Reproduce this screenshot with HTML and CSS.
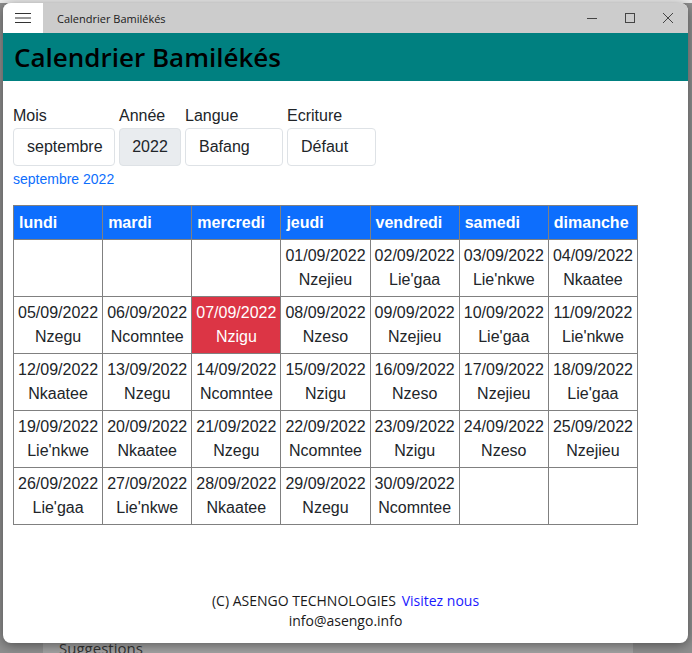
FILE: index.html
```html
<!DOCTYPE html>
<html lang="fr">

<head>
    <meta charset="UTF-8">
    <meta name="viewport" content="width=device-width, initial-scale=1.0">
    <title>Calendrier Bamilékés</title>

    <link rel="stylesheet" href="styles.css">
</head>

<body>
    <div class="desk-panel">Suggestions</div>

    <div class="window">
        <div class="titlebar">
            <div class="menu-btn">
                <svg width="16" height="12" viewBox="0 0 16 12">
                    <path d="M0 1.5h16M0 6h16M0 10.5h16" stroke="#333" stroke-width="1.1" fill="none" />
                </svg>
            </div>
            <span class="win-title">Calendrier Bamilékés</span>
            <div class="win-controls">
                <svg width="12" height="12" viewBox="0 0 12 12">
                    <path d="M1 6.5h10" stroke="#444" stroke-width="1" fill="none" />
                </svg>
                <svg width="12" height="12" viewBox="0 0 12 12">
                    <rect x="1.5" y="1.5" width="9" height="9" stroke="#444" stroke-width="1" fill="none" />
                </svg>
                <svg width="12" height="12" viewBox="0 0 12 12">
                    <path d="M1 1l10 10M11 1L1 11" stroke="#444" stroke-width="1" fill="none" />
                </svg>
            </div>
        </div>

        <header class="app-header">
            <h1>Calendrier Bamilékés</h1>
        </header>

        <main class="content">
            <div class="filters">
                <div class="field">
                    <label>Mois</label>
                    <div class="box box-month">septembre</div>
                </div>
                <div class="field">
                    <label>Année</label>
                    <div class="box box-year">2022</div>
                </div>
                <div class="field">
                    <label>Langue</label>
                    <div class="box box-lang">Bafang</div>
                </div>
                <div class="field">
                    <label>Ecriture</label>
                    <div class="box box-script">Défaut</div>
                </div>
            </div>
            <a class="current" href="#">septembre 2022</a>

            <table class="calendar">
                <thead>
                    <tr>
                        <th>lundi</th>
                        <th>mardi</th>
                        <th>mercredi</th>
                        <th>jeudi</th>
                        <th>vendredi</th>
                        <th>samedi</th>
                        <th>dimanche</th>
                    </tr>
                </thead>
                <tbody>
                    <tr>
                        <td></td>
                        <td></td>
                        <td></td>
                        <td>01/09/2022<br>Nzejieu</td>
                        <td>02/09/2022<br>Lie'gaa</td>
                        <td>03/09/2022<br>Lie'nkwe</td>
                        <td>04/09/2022<br>Nkaatee</td>
                    </tr>
                    <tr>
                        <td>05/09/2022<br>Nzegu</td>
                        <td>06/09/2022<br>Ncomntee</td>
                        <td class="today">07/09/2022<br>Nzigu</td>
                        <td>08/09/2022<br>Nzeso</td>
                        <td>09/09/2022<br>Nzejieu</td>
                        <td>10/09/2022<br>Lie'gaa</td>
                        <td>11/09/2022<br>Lie'nkwe</td>
                    </tr>
                    <tr>
                        <td>12/09/2022<br>Nkaatee</td>
                        <td>13/09/2022<br>Nzegu</td>
                        <td>14/09/2022<br>Ncomntee</td>
                        <td>15/09/2022<br>Nzigu</td>
                        <td>16/09/2022<br>Nzeso</td>
                        <td>17/09/2022<br>Nzejieu</td>
                        <td>18/09/2022<br>Lie'gaa</td>
                    </tr>
                    <tr>
                        <td>19/09/2022<br>Lie'nkwe</td>
                        <td>20/09/2022<br>Nkaatee</td>
                        <td>21/09/2022<br>Nzegu</td>
                        <td>22/09/2022<br>Ncomntee</td>
                        <td>23/09/2022<br>Nzigu</td>
                        <td>24/09/2022<br>Nzeso</td>
                        <td>25/09/2022<br>Nzejieu</td>
                    </tr>
                    <tr>
                        <td>26/09/2022<br>Lie'gaa</td>
                        <td>27/09/2022<br>Lie'nkwe</td>
                        <td>28/09/2022<br>Nkaatee</td>
                        <td>29/09/2022<br>Nzegu</td>
                        <td>30/09/2022<br>Ncomntee</td>
                        <td></td>
                        <td></td>
                    </tr>
                </tbody>
            </table>
        </main>

        <footer class="app-footer">
            <p>(C) ASENGO TECHNOLOGIES <a href="#">Visitez nous</a></p>
            <p>info@asengo.info</p>
        </footer>
    </div>
</body>

</html>
```

FILE: styles.css
```css
* {
    box-sizing: border-box;
}

body {
    margin: 0;
    padding: 3px 0 0 3px;
    width: 692px;
    height: 653px;
    overflow: hidden;
    position: relative;
    background: linear-gradient(#ececec 0, #ececec 3px, #8f8f8f 3px);
    font-family: 'Liberation Sans', Arial, sans-serif;
}

.desk-panel {
    position: absolute;
    left: 43px;
    top: 600px;
    width: 590px;
    height: 53px;
    padding: 38px 0 0 16px;
    background: #a2a2a2;
    color: #333;
    font-family: 'Open Sans', sans-serif;
    font-size: 15px;
    line-height: 20px;
}

.window {
    position: relative;
    width: 685px;
    height: 640px;
    background: #fff;
    border-radius: 8px;
    overflow: hidden;
    display: flex;
    flex-direction: column;
    box-shadow: 0 2px 12px rgba(0, 0, 0, 0.45);
}

/* title bar */
.titlebar {
    height: 30px;
    background: #cccccc;
    display: flex;
    align-items: center;
    flex-shrink: 0;
}

.menu-btn {
    width: 40px;
    height: 30px;
    background: #fff;
    display: flex;
    align-items: center;
    justify-content: center;
}

.win-title {
    margin-left: 14px;
    font-family: 'Open Sans', sans-serif;
    font-size: 11px;
    color: #1a1a1a;
}

.win-controls {
    margin-left: auto;
    display: flex;
    gap: 26px;
    padding-right: 14px;
}

/* header */
.app-header {
    height: 48px;
    background: #008080;
    display: flex;
    align-items: center;
    padding-left: 11px;
    flex-shrink: 0;
}

.app-header h1 {
    margin: 0;
    font-family: 'Open Sans', sans-serif;
    font-size: 26px;
    font-weight: 600;
    color: #000;
}

/* form */
.content {
    flex: 1;
    padding: 25px 10px 0 10px;
}

.filters {
    display: flex;
    gap: 4px;
}

.field {
    display: flex;
    flex-direction: column;
}

.field label {
    font-size: 16px;
    line-height: 20px;
    color: #212529;
    margin-bottom: 2px;
}

.box {
    height: 38px;
    border: 1px solid #dee2e6;
    border-radius: 4px;
    font-size: 16px;
    line-height: 36px;
    color: #212529;
    padding: 0 13px;
    background: #fff;
}

.box-month {
    width: 102px;
}

.box-year {
    width: 62px;
    text-align: center;
    padding: 0;
    background: #e9ecef;
}

.box-lang {
    width: 98px;
}

.box-script {
    width: 89px;
}

.current {
    display: block;
    margin-top: 4px;
    font-size: 14px;
    line-height: 18px;
    color: #0d6efd;
    text-decoration: none;
}

/* calendar */
.calendar {
    margin-top: 17px;
    width: 625px;
    border-collapse: collapse;
    table-layout: fixed;
    font-size: 16px;
}

.calendar th,
.calendar td {
    border: 1px solid #808080;
}

.calendar th {
    height: 34px;
    background: #0d6efd;
    color: #fff;
    font-weight: bold;
    text-align: left;
    padding: 0 5px;
}

.calendar td {
    height: 57px;
    padding: 3px 2px;
    text-align: center;
    line-height: 24px;
    color: #212529;
}

.calendar td.today {
    background: #dc3545;
    color: #fff;
}

/* footer */
.app-footer {
    text-align: center;
    font-family: 'Open Sans', sans-serif;
    font-size: 14px;
    color: #1a1a1a;
    padding-bottom: 12px;
}

.app-footer p {
    margin: 0;
    line-height: 20px;
}

.app-footer a {
    color: #1a1aff;
    text-decoration: none;
    margin-left: 2px;
}
```
